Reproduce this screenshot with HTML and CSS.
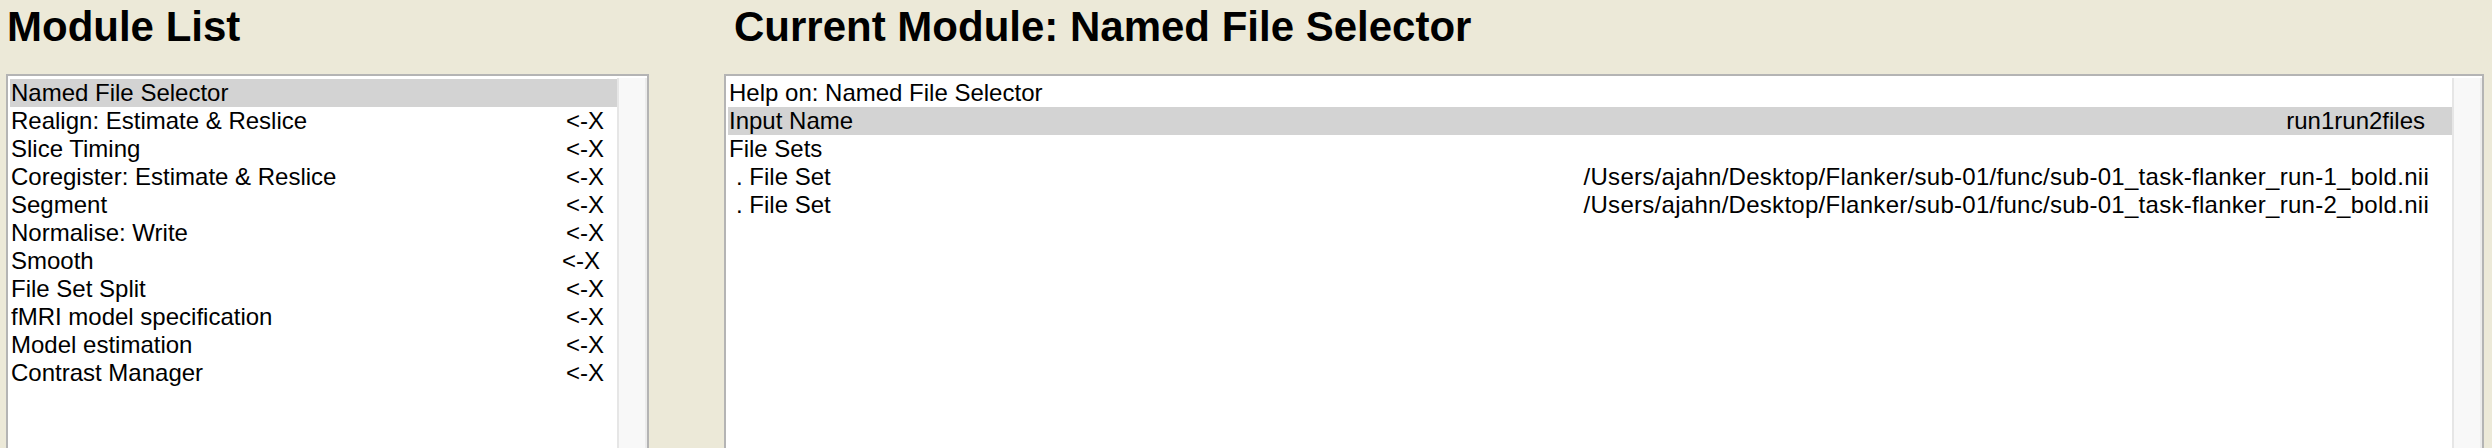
FILE: index.html
```html
<!DOCTYPE html>
<html>
<head>
<meta charset="utf-8">
<title>Batch Editor</title>
<link rel="stylesheet" href="styles.css">
</head>
<body>
<div class="page">
  <section class="col col-left">
    <h1 class="heading heading-left">Module List</h1>
    <div class="panel">
      <div class="list">
        <div class="row selected"><span class="label">Named File Selector</span></div>
        <div class="row"><span class="label">Realign: Estimate &amp; Reslice</span><span class="remove">&lt;-X</span></div>
        <div class="row"><span class="label">Slice Timing</span><span class="remove">&lt;-X</span></div>
        <div class="row"><span class="label">Coregister: Estimate &amp; Reslice</span><span class="remove">&lt;-X</span></div>
        <div class="row"><span class="label">Segment</span><span class="remove">&lt;-X</span></div>
        <div class="row"><span class="label">Normalise: Write</span><span class="remove">&lt;-X</span></div>
        <div class="row"><span class="label">Smooth</span><span class="remove shift">&lt;-X</span></div>
        <div class="row"><span class="label">File Set Split</span><span class="remove">&lt;-X</span></div>
        <div class="row"><span class="label">fMRI model specification</span><span class="remove">&lt;-X</span></div>
        <div class="row"><span class="label">Model estimation</span><span class="remove">&lt;-X</span></div>
        <div class="row"><span class="label">Contrast Manager</span><span class="remove">&lt;-X</span></div>
      </div>
      <div class="scrollbar"></div>
    </div>
  </section>
  <section class="col col-right">
    <h1 class="heading heading-right">Current Module: Named File Selector</h1>
    <div class="panel">
      <div class="list">
        <div class="row"><span class="label">Help on: Named File Selector</span></div>
        <div class="row selected"><span class="label">Input Name</span><span class="value value-name">run1run2files</span></div>
        <div class="row"><span class="label">File Sets</span></div>
        <div class="row"><span class="label sub">. File Set</span><span class="value value-path">/Users/ajahn/Desktop/Flanker/sub-01/func/sub-01_task-flanker_run-1_bold.nii</span></div>
        <div class="row"><span class="label sub">. File Set</span><span class="value value-path">/Users/ajahn/Desktop/Flanker/sub-01/func/sub-01_task-flanker_run-2_bold.nii</span></div>
      </div>
      <div class="scrollbar"></div>
    </div>
  </section>
</div>
</body>
</html>
```
FILE: styles.css
```css
html, body {
  margin: 0;
  padding: 0;
  height: 448px;
  overflow: hidden;
  background: #ece9d8;
}

body {
  font-family: "Liberation Sans", Arial, Helvetica, sans-serif;
  color: #000;
}

.page {
  display: flex;
  gap: 75px;
  padding-left: 6px;
  height: 448px;
}

.col {
  display: flex;
  flex-direction: column;
}

.col-left {
  width: 643px;
}

.col-right {
  width: 1760px;
}

.heading {
  flex: none;
  margin: 0;
  height: 71px;
  padding-top: 3px;
  font-size: 42px;
  line-height: 48px;
  font-weight: bold;
}

.heading-left {
  padding-left: 1px;
}

.heading-right {
  padding-left: 10px;
}

.panel {
  flex: none;
  display: flex;
  height: 380px;
  background: #fff;
  border: 2px solid #b4b4b4;
  border-bottom: none;
}

.list {
  flex: 1;
  padding: 3px 0 0 2px;
}

.row {
  display: flex;
  justify-content: space-between;
  height: 28px;
  line-height: 28px;
  font-size: 24px;
  white-space: nowrap;
  padding-left: 1px;
}

.row.selected {
  background: #d3d3d3;
}

.remove {
  padding-right: 13px;
}

.remove.shift {
  padding-right: 17px;
}

.label.sub {
  padding-left: 7px;
}

.value {
  padding-right: 23px;
}

.value-path {
  letter-spacing: 0.28px;
}

.value-name {
  padding-right: 27px;
}

.scrollbar {
  width: 26px;
  margin-top: 2px;
  background: #f8f8f8;
  border-left: 2px solid #e6e6e6;
  border-right: 2px solid #ececec;
}
```
